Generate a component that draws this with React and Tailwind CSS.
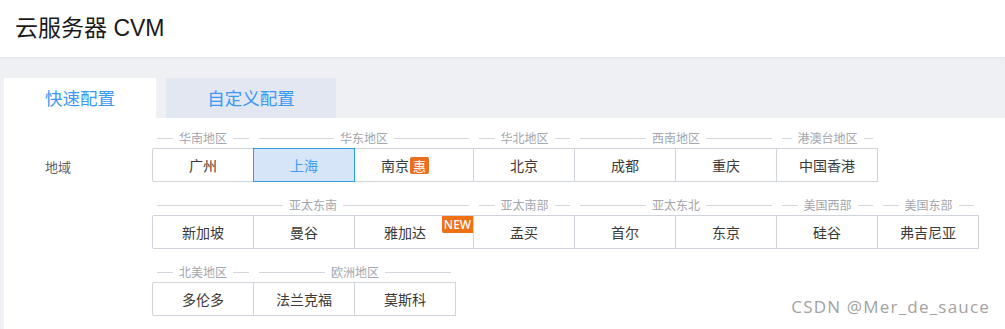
const rows = [
  [
    { label: "华南地区", cells: [{ name: "广州" }] },
    { label: "华东地区", cells: [{ name: "上海", active: true }, { name: "南京", tag: "惠" }] },
    { label: "华北地区", cells: [{ name: "北京" }] },
    { label: "西南地区", cells: [{ name: "成都" }, { name: "重庆" }] },
    { label: "港澳台地区", cells: [{ name: "中国香港" }] },
  ],
  [
    { label: "亚太东南", cells: [{ name: "新加坡" }, { name: "曼谷" }, { name: "雅加达", isNew: true }] },
    { label: "亚太南部", cells: [{ name: "孟买" }] },
    { label: "亚太东北", cells: [{ name: "首尔" }, { name: "东京" }] },
    { label: "美国西部", cells: [{ name: "硅谷" }] },
    { label: "美国东部", cells: [{ name: "弗吉尼亚" }] },
  ],
  [
    { label: "北美地区", cells: [{ name: "多伦多" }] },
    { label: "欧洲地区", cells: [{ name: "法兰克福" }, { name: "莫斯科" }] },
  ],
];

const Cell = ({ cell, first }) => {
  const wide = cell.tag || cell.isNew;
  const width = first ? "w-[102px] border-l rounded-l-[2px]" : wide ? "w-[119px] pr-[18px]" : "w-[101px]";
  return (
    <div
      className={`relative h-[34px] flex items-center justify-center border-y border-r border-[#cfd3dc] text-[14px] ${width} ${
        cell.active ? "bg-[#d6e5f8] text-[#3b9bf5]" : "bg-white text-[#3a3a3a]"
      }`}
    >
      {cell.active && <div className="absolute -left-px -right-px -top-px -bottom-px border border-[#2b9cf0]" />}
      <span className="leading-none">{cell.name}</span>
      {cell.tag && (
        <span className="ml-px w-[19px] h-[17px] flex items-center justify-center bg-[#ee6d1d] text-white text-[13px] rounded-[2px] leading-none">
          {cell.tag}
        </span>
      )}
      {cell.isNew && (
        <span className="absolute top-0 right-0 w-[31px] h-[17px] flex items-center justify-center bg-[#f07014] text-white text-[12px] font-medium leading-none rounded-bl-[2px] font-['Noto_Sans',sans-serif]">
          NEW
        </span>
      )}
    </div>
  );
};

const Group = ({ group, firstInRow }) => (
  <div className="flex flex-col">
    <div className="h-4 mb-0.5 px-[5px] flex items-center gap-[6px]">
      <div className="flex-1 h-px bg-[#d3d6dd]" />
      <span className="text-[12px] leading-4 text-[#a3a6ad] whitespace-nowrap">{group.label}</span>
      <div className="flex-1 h-px bg-[#d3d6dd]" />
    </div>
    <div className="flex">
      {group.cells.map((c, i) => (
        <Cell key={c.name} cell={c} first={firstInRow && i === 0} />
      ))}
    </div>
  </div>
);

export default function App() {
  return (
    <div className="relative w-[1005px] h-[329px] overflow-hidden bg-[#eff0f4] font-['Noto_Sans_CJK_SC','Noto_Sans',sans-serif]">
      {/* header */}
      <div className="h-[57px] bg-white shadow-[0_1px_3px_rgba(0,0,0,0.06)] flex items-center pl-[15px] relative z-10">
        <h1 className="text-[23px] text-[#1a1a1a] font-['Liberation_Sans','Noto_Sans_CJK_SC',sans-serif] leading-none">
          云服务器 CVM
        </h1>
      </div>

      {/* tabs */}
      <div className="pt-[21px] pl-1 flex gap-[10px]">
        <div className="w-[152px] h-10 bg-white flex items-center justify-center text-[17.5px] text-[#3a98f6]">
          快速配置
        </div>
        <div className="w-[170px] h-10 bg-[#e2e7f1] flex items-center justify-center text-[17.5px] text-[#3a98f6]">
          自定义配置
        </div>
      </div>

      {/* content */}
      <div className="ml-1 bg-white h-[300px] flex">
        <div className="w-[148px] pl-[41px] pt-[41px]">
          <div className="text-[13px] leading-4 text-[#5f6268]">地域</div>
        </div>
        <div className="pt-3 flex flex-col gap-[15px]">
          {rows.map((row, ri) => (
            <div key={ri} className="flex">
              {row.map((g, gi) => (
                <Group key={g.label} group={g} firstInRow={gi === 0} />
              ))}
            </div>
          ))}
        </div>
      </div>

      <div className="absolute right-[15px] bottom-[10px] text-[17px] tracking-[1.2px] text-[#a2a2a2] font-['Open_Sans','Noto_Sans',sans-serif]">
        CSDN @Mer_de_sauce
      </div>
    </div>
  );
}
